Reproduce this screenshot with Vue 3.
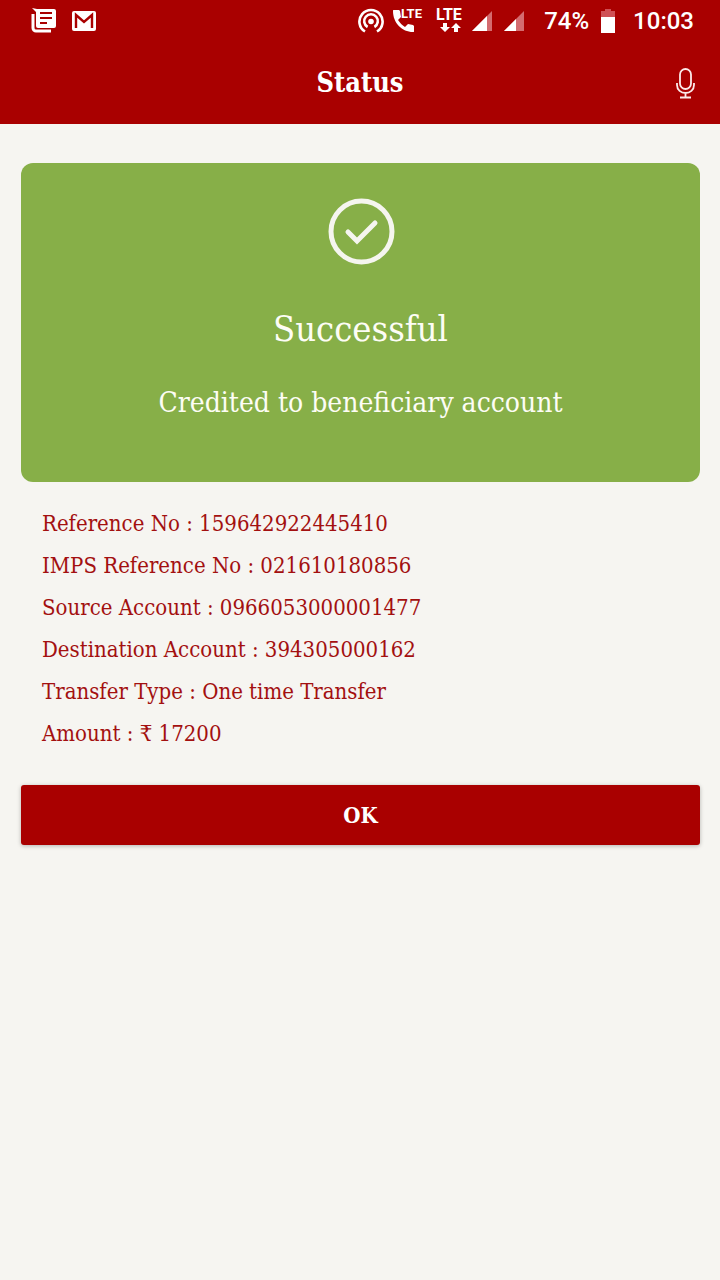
<script setup>
const details = [
  { label: 'Reference No', value: '159642922445410' },
  { label: 'IMPS Reference No', value: '021610180856' },
  { label: 'Source Account', value: '0966053000001477' },
  { label: 'Destination Account', value: '394305000162' },
  { label: 'Transfer Type', value: 'One time Transfer' },
  { label: 'Amount', value: '₹ 17200' },
]
</script>

<template>
  <div class="screen">
    <header class="top">
      <div class="statusbar">
        <div class="notifications">
          <svg width="26" height="26" viewBox="0 0 26 26" aria-hidden="true">
            <path d="M2 6v14a3 3 0 0 0 3 3h15" fill="none" stroke="#fff" stroke-width="3" />
            <path fill-rule="evenodd" fill="#fff" d="M1 0l5 1h17a2 2 0 0 1 2 2v15a2 2 0 0 1-2 2H7a2 2 0 0 1-2-2V4zM9 4v2h12V4zM9 9v2h12V9zM9 14v2h7v-2z" />
          </svg>
          <svg width="24" height="20" viewBox="0 0 24 20" aria-hidden="true">
            <rect width="24" height="20" rx="2" fill="#fff" />
            <path d="M4 17V4l8 7 8-7v13" fill="none" stroke="#a90000" stroke-width="2.4" />
          </svg>
        </div>
        <div class="indicators">
          <svg width="26" height="26" viewBox="0 0 26 26" aria-hidden="true">
            <g fill="none" stroke="#fff" stroke-width="2.6">
              <path d="M7 23.5a11.6 11.6 0 1 1 12 0" />
              <path d="M9.6 19a6.8 6.8 0 1 1 6.8 0" />
            </g>
            <circle cx="13" cy="13.5" r="2.8" fill="#fff" />
          </svg>
          <svg class="call" width="34" height="34" viewBox="0 -4 34 34" aria-hidden="true">
            <path fill="#fff" d="M2 2h5l1 1 1 6-3 3c2 3 4 5 7 7l3-3 5 1 1 1v5c0 1 0 1-1 1C10 24 1 15 1 3c0-1 0-1 1-1z" />
            <text x="9" y="10" class="lte-small">LTE</text>
          </svg>
          <svg class="data" width="30" height="34" viewBox="0 -4 30 34" aria-hidden="true">
            <text x="1" y="12" class="lte">LTE</text>
            <path fill="#fff" d="M8 15h4v4h3l-5 5-5-5h3z M19 24h4v-4h3l-5-5-5 5h3z" />
          </svg>
          <svg v-for="n in 2" :key="n" class="signal" width="20" height="20" viewBox="0 0 20 20" aria-hidden="true">
            <path d="M0 20L20 0v20z" fill="#d46b6f" />
            <path :d="n === 1 ? 'M0 20L15 5v15z' : 'M0 20L12 8v12z'" fill="#fff" />
          </svg>
          <span class="percent">74%</span>
          <svg class="battery" width="14" height="24" viewBox="0 0 14 24" aria-hidden="true">
            <path d="M0 2h4V0h6v2h4v6H0z" fill="#cf5055" />
            <path d="M0 8h14v16H0z" fill="#fff" />
          </svg>
          <time class="clock">10:03</time>
        </div>
      </div>
      <div class="titlebar">
        <h1>Status</h1>
        <button class="mic" type="button" aria-label="Voice">
          <svg width="20" height="32" viewBox="0 0 20 32" aria-hidden="true">
            <g fill="none" stroke="#fbe9e9" stroke-width="1.8">
              <rect x="4" y="2" width="11" height="20" rx="5.5" />
              <path d="M1 16v2c0 5 4 8 8.5 8s8.5-3 8.5-8v-2M9.5 26v4.5M4 30.5h11" />
            </g>
          </svg>
        </button>
      </div>
    </header>

    <main>
      <section class="result">
        <svg width="68" height="68" viewBox="0 0 68 68" aria-hidden="true">
          <circle cx="34.5" cy="34.5" r="30.5" fill="none" stroke="#f5f5ef" stroke-width="5" />
          <path d="M21 35l9 9 18-18" fill="none" stroke="#f5f5ef" stroke-width="5" stroke-linecap="round" />
        </svg>
        <h2>Successful</h2>
        <p>Credited to beneficiary account</p>
      </section>
      <ul class="details">
        <li v-for="d in details" :key="d.label">{{ d.label }} : {{ d.value }}</li>
      </ul>
      <button class="ok" type="button">OK</button>
    </main>
  </div>
</template>

<style>
body {
  background: #f6f5f1;
}
</style>

<style scoped>
.screen {
  min-height: 100vh;
  background: #f6f5f1;
  font-family: "Roboto Slab", "DejaVu Serif Condensed", "DejaVu Serif", serif;
}
.top {
  background: #a90000;
  color: #fff;
}
.statusbar {
  display: flex;
  justify-content: space-between;
  align-items: center;
  height: 42px;
  padding: 0 26px 0 31px;
  font: 500 24px/28px Roboto, sans-serif;
}
.notifications {
  display: flex;
  align-items: center;
  gap: 15px;
}
.indicators {
  display: flex;
  align-items: center;
}
.call {
  margin-left: 8px;
}
.data {
  margin-left: 9px;
}
.signal {
  margin-left: 7px;
}
.signal + .signal {
  margin-left: 12px;
}
.lte-small {
  font: 700 13px Roboto, sans-serif;
  fill: #fff;
}
.lte {
  font: 700 16px Roboto, sans-serif;
  fill: #fff;
}
.percent {
  margin-left: 20px;
}
.battery {
  margin: 0 18px 0 12px;
}
.titlebar {
  display: grid;
  grid-template-columns: 1fr auto 1fr;
  align-items: center;
  height: 82px;
  padding: 0 24px;
}
h1 {
  grid-column: 2;
  margin: 0;
  font-size: 27px;
  line-height: 36px;
  font-weight: 700;
}
.mic {
  justify-self: end;
  display: flex;
  padding: 0;
  border: 0;
  background: none;
  color: inherit;
}
main {
  padding: 39px 20px 20px 21px;
}
.result {
  display: flex;
  flex-direction: column;
  align-items: center;
  padding: 34px 16px 61px;
  border-radius: 12px;
  background: #87af48;
  color: #fdfdf5;
  text-align: center;
}
h2 {
  margin: 40px 0 0;
  font-size: 36px;
  line-height: 48px;
  font-weight: 400;
}
.result p {
  margin: 32px 0 0;
  font-size: 28px;
  line-height: 36px;
}
.details {
  margin: 21px 0 0;
  padding: 0 21px;
  list-style: none;
  color: #a31010;
  font-size: 22px;
  line-height: 42px;
}
.ok {
  display: block;
  width: 100%;
  height: 60px;
  margin-top: 30px;
  padding: 0;
  border: 0;
  border-radius: 3px;
  background: #a90000;
  box-shadow: 0 1px 4px #0004;
  color: #fff;
  font: inherit;
  font-size: 22px;
  font-weight: 700;
}
</style>
